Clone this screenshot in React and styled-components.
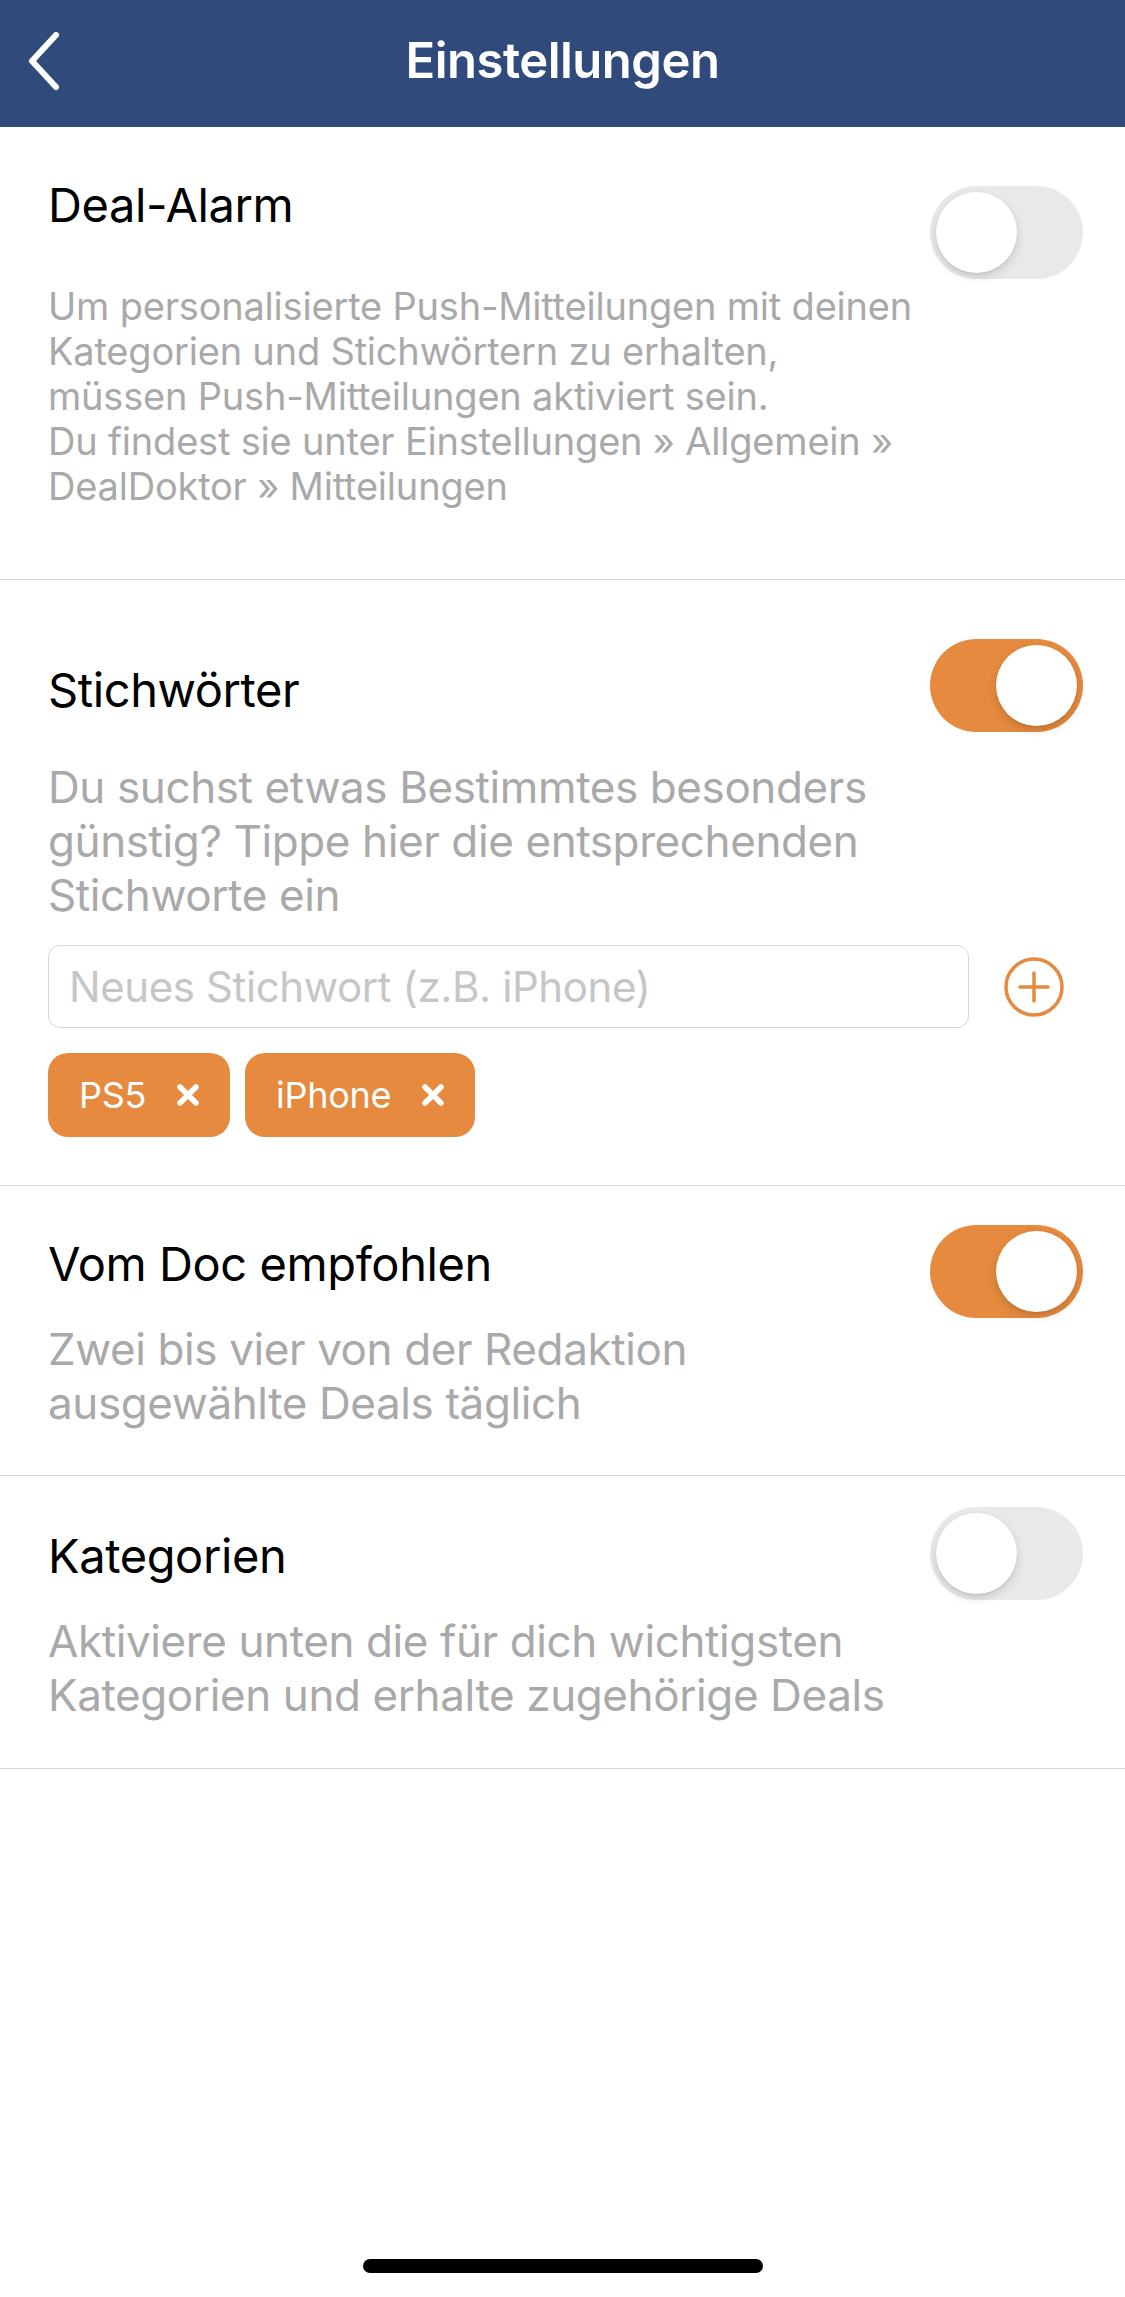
import React, { useState } from "react";
import styled, { createGlobalStyle } from "styled-components";

const ORANGE = "#e58a3e";

const GlobalStyle = createGlobalStyle`
  html, body {
    margin: 0;
    padding: 0;
    background: #ffffff;
  }
  body {
    font-family: Inter, "Liberation Sans", sans-serif;
    -webkit-font-smoothing: antialiased;
  }
`;

const Page = styled.div`
  width: 1125px;
  height: 2297px;
  display: flex;
  flex-direction: column;
  background: #fff;
  overflow: hidden;
`;

const NavBar = styled.header`
  height: 127px;
  flex-shrink: 0;
  background: #2f4a7b;
  display: grid;
  grid-template-columns: 120px 1fr 120px;
  align-items: center;
`;

const BackButton = styled.button`
  background: none;
  border: none;
  padding: 0 0 6px 24px;
  display: flex;
  align-items: center;
  cursor: pointer;
`;

const NavTitle = styled.h1`
  margin: 0 0 6px;
  text-align: center;
  color: #fff;
  font-size: 49px;
  font-weight: 600;
  letter-spacing: -0.5px;
`;

const Section = styled.section`
  padding: ${(p) => p.$pt}px 42px ${(p) => p.$pb}px 48px;
  border-bottom: 1.5px solid #d9d9d9;
`;

const Head = styled.div`
  height: 58px;
  display: flex;
  align-items: flex-start;
  justify-content: space-between;
`;

const Title = styled.h2`
  margin: 0;
  font-size: 47px;
  line-height: 58px;
  font-weight: 400;
  color: #000;
  letter-spacing: -0.4px;
`;

const Toggle = styled.button`
  flex-shrink: 0;
  margin-top: ${(p) => p.$offset}px;
  width: 153px;
  height: 93px;
  border-radius: 47px;
  border: none;
  padding: 6px;
  display: flex;
  justify-content: ${(p) => (p.$on ? "flex-end" : "flex-start")};
  background: ${(p) => (p.$on ? ORANGE : "#e9e9ea")};
  cursor: pointer;
`;

const Knob = styled.span`
  width: 81px;
  height: 81px;
  border-radius: 50%;
  background: #fff;
  box-shadow: 0 4px 10px rgba(0, 0, 0, 0.14), 0 1px 2px rgba(0, 0, 0, 0.08);
`;

const Desc = styled.p`
  margin: ${(p) => p.$mt}px 0 0;
  font-size: ${(p) => (p.$small ? 38 : 44)}px;
  line-height: ${(p) => (p.$small ? 45 : 54)}px;
  color: #a9a9a9;
  letter-spacing: ${(p) => (p.$small ? -0.2 : -0.4)}px;
`;

const InputRow = styled.div`
  margin-top: 23px;
  display: flex;
  align-items: center;
  gap: 34px;
`;

const KeywordInput = styled.input`
  flex: 1;
  height: 83px;
  box-sizing: border-box;
  border: 1.5px solid #d6d6d6;
  border-radius: 12px;
  padding: 0 20px;
  font-family: inherit;
  font-size: 42px;
  letter-spacing: -0.4px;
  color: #000;
  outline: none;
  &::placeholder {
    color: #c6c6c6;
  }
`;

const AddButton = styled.button`
  width: 62px;
  height: 62px;
  padding: 0;
  margin-right: 18px;
  border: none;
  background: none;
  display: flex;
  cursor: pointer;
`;

const Chips = styled.div`
  margin-top: 25px;
  display: flex;
  flex-wrap: wrap;
  gap: 15px;
`;

const Chip = styled.div`
  height: 84px;
  box-sizing: border-box;
  padding: 0 30px 0 31px;
  display: flex;
  align-items: center;
  gap: 30px;
  border-radius: 20px;
  background: ${ORANGE};
  color: #fff;
  font-size: 36px;
  letter-spacing: -0.3px;
`;

const ChipClose = styled.button`
  background: none;
  border: none;
  padding: 0;
  display: flex;
  cursor: pointer;
`;

const Spacer = styled.div`
  flex: 1;
`;

const HomeBar = styled.div`
  align-self: center;
  width: 400px;
  height: 14px;
  border-radius: 7px;
  background: #000;
  margin-bottom: 24px;
`;

const Switch = ({ on, offset, onClick }) => (
  <Toggle type="button" $on={on} $offset={offset} onClick={onClick}>
    <Knob />
  </Toggle>
);

const App = () => {
  const [toggles, setToggles] = useState({
    alarm: false,
    keywords: true,
    doc: true,
    categories: false,
  });
  const [keywords, setKeywords] = useState(["PS5", "iPhone"]);
  const [value, setValue] = useState("");

  const flip = (key) => setToggles((t) => ({ ...t, [key]: !t[key] }));

  const addKeyword = () => {
    const v = value.trim();
    if (v) {
      setKeywords([...keywords, v]);
      setValue("");
    }
  };

  return (
    <Page>
      <GlobalStyle />
      <NavBar>
        <BackButton type="button" aria-label="Zurück">
          <svg width="40" height="62" viewBox="0 0 40 62">
            <path
              d="M32 5 L8 31 L32 57"
              fill="none"
              stroke="#fff"
              strokeWidth="6"
              strokeLinecap="round"
              strokeLinejoin="round"
            />
          </svg>
        </BackButton>
        <NavTitle>Einstellungen</NavTitle>
        <span />
      </NavBar>

      <Section $pt={49} $pb={70}>
        <Head>
          <Title>Deal-Alarm</Title>
          <Switch on={toggles.alarm} offset={10} onClick={() => flip("alarm")} />
        </Head>
        <Desc $small $mt={50}>
          Um personalisierte Push-Mitteilungen mit deinen
          <br />
          Kategorien und Stichwörtern zu erhalten,
          <br />
          müssen Push-Mitteilungen aktiviert sein.
          <br />
          Du findest sie unter Einstellungen » Allgemein »
          <br />
          DealDoktor » Mitteilungen
        </Desc>
      </Section>

      <Section $pt={81} $pb={48}>
        <Head>
          <Title>Stichwörter</Title>
          <Switch on={toggles.keywords} offset={-22} onClick={() => flip("keywords")} />
        </Head>
        <Desc $mt={41}>
          Du suchst etwas Bestimmtes besonders
          <br />
          günstig? Tippe hier die entsprechenden
          <br />
          Stichworte ein
        </Desc>
        <InputRow>
          <KeywordInput
            type="text"
            placeholder="Neues Stichwort (z.B. iPhone)"
            value={value}
            onChange={(e) => setValue(e.target.value)}
            onKeyDown={(e) => {
              if (e.key === "Enter") addKeyword();
            }}
          />
          <AddButton type="button" aria-label="Hinzufügen" onClick={addKeyword}>
            <svg width="62" height="62" viewBox="0 0 62 62">
              <circle cx="31" cy="31" r="28" fill="none" stroke={ORANGE} strokeWidth="3.5" />
              <path
                d="M31 17 V45 M17 31 H45"
                stroke={ORANGE}
                strokeWidth="3.5"
                strokeLinecap="round"
              />
            </svg>
          </AddButton>
        </InputRow>
        <Chips>
          {keywords.map((k, i) => (
            <Chip key={k + i}>
              <span>{k}</span>
              <ChipClose
                type="button"
                aria-label="Entfernen"
                onClick={() => setKeywords(keywords.filter((_, j) => j !== i))}
              >
                <svg width="24" height="24" viewBox="0 0 24 24">
                  <path
                    d="M4 4 L20 20 M20 4 L4 20"
                    stroke="#fff"
                    strokeWidth="5.5"
                    strokeLinecap="round"
                  />
                </svg>
              </ChipClose>
            </Chip>
          ))}
        </Chips>
      </Section>

      <Section $pt={49} $pb={45}>
        <Head>
          <Title>Vom Doc empfohlen</Title>
          <Switch on={toggles.doc} offset={-10} onClick={() => flip("doc")} />
        </Head>
        <Desc $mt={29}>
          Zwei bis vier von der Redaktion
          <br />
          ausgewählte Deals täglich
        </Desc>
      </Section>

      <Section $pt={51} $pb={46}>
        <Head>
          <Title>Kategorien</Title>
          <Switch on={toggles.categories} offset={-20} onClick={() => flip("categories")} />
        </Head>
        <Desc $mt={29}>
          Aktiviere unten die für dich wichtigsten
          <br />
          Kategorien und erhalte zugehörige Deals
        </Desc>
      </Section>

      <Spacer />
      <HomeBar />
    </Page>
  );
};

export default App;
